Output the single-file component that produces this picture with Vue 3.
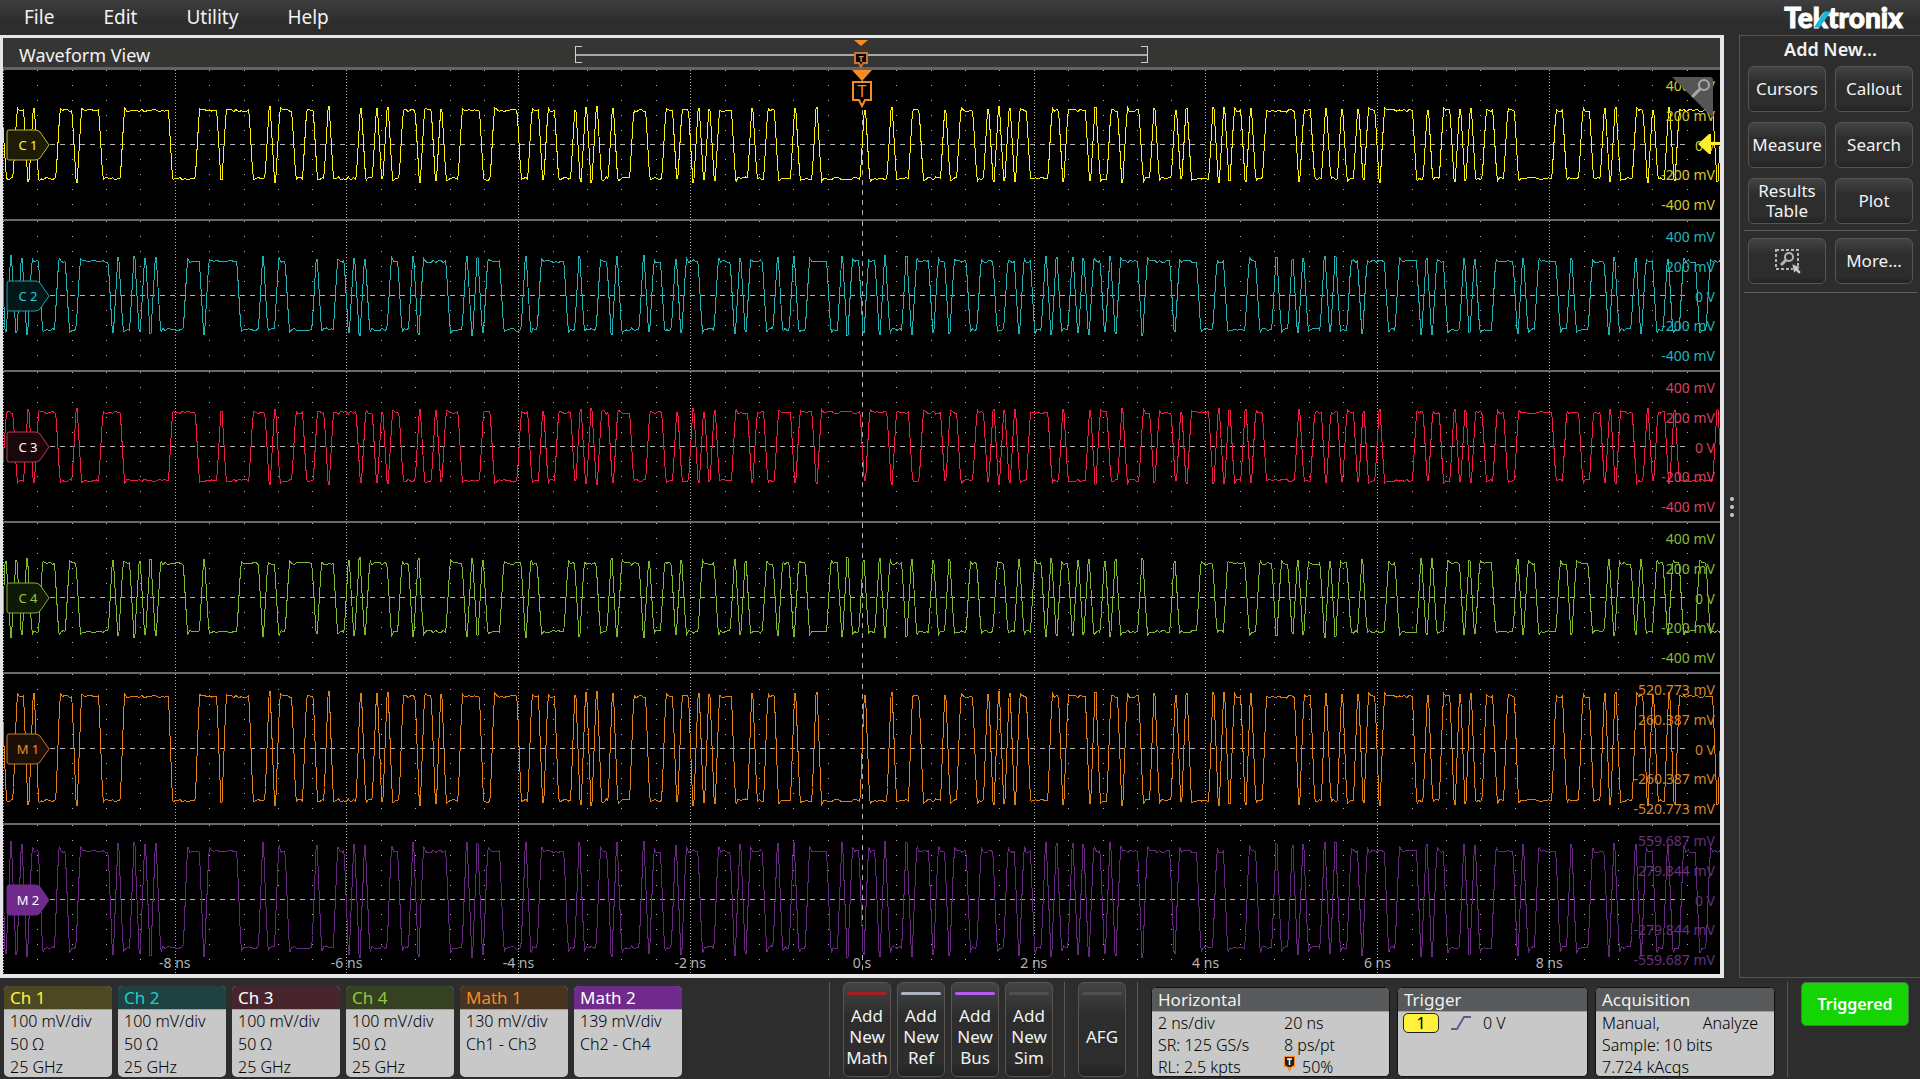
<template>
  <div class="scope">
    <header class="menubar">
      <nav class="menu">
        <button v-for="item in menu" :key="item" type="button">{{ item }}</button>
      </nav>
      <div class="logo">
        Tektronix
        <svg class="logo-slash" viewBox="0 0 18 18" aria-hidden="true">
          <path d="M0 18 11 1h7L6 18z" fill="#1fb6dc" />
        </svg>
      </div>
    </header>

    <main class="workspace">
      <section class="view">
        <div class="view-header">
          <h1>Waveform View</h1>
          <div class="overview">
            <svg class="overview-mark" viewBox="0 0 20 30" aria-hidden="true">
              <path d="M3 2h14l-7 6z" fill="#f68b1f" />
              <path d="M4 15h12v10h-4l-2 4-2-4H4z" fill="#000" stroke="#c8742a" stroke-width="2" />
              <text x="10" y="24" text-anchor="middle" font-size="9" font-weight="700" fill="#d98a45">T</text>
            </svg>
          </div>
        </div>

        <div class="plot">
          <div v-for="track in tracks" :key="track.id" class="track">
            <svg class="trace" :viewBox="`0 0 ${W} ${H}`" preserveAspectRatio="none">
              <path :d="dots" class="grid" />
              <path :d="majors" class="grid" stroke-dasharray="1 2" />
              <path :d="`M47 ${H / 2}H1682`" class="grid" stroke-dasharray="5 5" />
              <path :d="`M859.5 0V${H}`" class="grid" stroke-dasharray="5 5" />
              <path :d="track.path" class="wave" :stroke="track.wave" />
            </svg>
            <ul class="levels" :style="{ color: track.label }">
              <li v-for="level in track.levels" :key="level">{{ level }}</li>
            </ul>
            <div class="handle" :style="{ color: track.text }">
              <svg viewBox="0 0 44 32" aria-hidden="true">
                <path
                  d="M3 1h26q3 0 5 2l9 13-9 13q-2 2-5 2H3q-2 0-2-2V3q0-2 2-2z"
                  :fill="track.fill"
                  :stroke="track.edge"
                />
              </svg>
              <span>{{ track.id }}</span>
            </div>
          </div>

          <svg class="trigger-mark" viewBox="0 0 22 40" aria-hidden="true">
            <path d="M1 0h20L11 11z" fill="#f68b1f" />
            <path d="M2 12h18v18h-6l-3 6-3-6H2z" fill="#000" stroke="#f68b1f" stroke-width="2" />
            <text x="11" y="27" text-anchor="middle" font-size="16" fill="#f68b1f">T</text>
          </svg>
          <svg class="trigger-level" viewBox="0 0 22 20" aria-hidden="true">
            <path d="M0 10 11 0h2v8h9v3h-9v9h-2z" fill="#fff02e" />
          </svg>
          <svg class="zoom-corner" viewBox="0 0 42 42" aria-hidden="true">
            <path d="M0 0h38q3 0 3 3v38z" fill="#555" />
            <circle cx="32" cy="8" r="5" fill="none" stroke="#aaa" stroke-width="2" />
            <path d="m28 12-7 7" stroke="#aaa" stroke-width="3" stroke-linecap="round" />
          </svg>
          <span v-for="t in times" :key="t.label" class="time" :style="{ left: t.left }">{{ t.label }}</span>
        </div>
      </section>

      <div class="grip"><i></i><i></i><i></i></div>

      <aside class="side">
        <h2>Add New...</h2>
        <div class="side-grid">
          <button v-for="item in addNew" :key="item" type="button" class="btn">{{ item }}</button>
        </div>
        <div class="side-grid more">
          <button type="button" class="btn" aria-label="Draw a box">
            <svg width="28" height="26" viewBox="0 0 28 26" aria-hidden="true">
              <path d="M3 2h22v19H3z" fill="none" stroke="#b5b5b5" stroke-width="2" stroke-dasharray="3 2" />
              <circle cx="16" cy="9" r="4" fill="none" stroke="#b5b5b5" stroke-width="2" />
              <path d="m13 12-5 5" stroke="#b5b5b5" stroke-width="3" />
              <path d="m19 16 8 3-2 2 3 3-2 2-3-3-2 2z" fill="#c8c8c8" stroke="#2d2d2d" stroke-width="0.5" />
            </svg>
          </button>
          <button type="button" class="btn">More...</button>
        </div>
      </aside>
    </main>

    <footer class="settings">
      <div class="channels">
        <div v-for="ch in channels" :key="ch.name" class="card">
          <h3 :style="{ color: ch.color, background: ch.bg }">{{ ch.name }}</h3>
          <p v-for="line in ch.lines" :key="line">{{ line }}</p>
        </div>
      </div>

      <div class="adders">
        <button v-for="a in adders" :key="a.name" type="button" class="btn tall">
          <i :style="{ background: a.color }"></i>
          <span>Add<br />New<br />{{ a.name }}</span>
        </button>
      </div>
      <div class="adders">
        <button type="button" class="btn tall">
          <i></i>
          <span>AFG</span>
        </button>
      </div>

      <div class="systems">
        <div class="card dark horizontal">
          <h3>Horizontal</h3>
          <div class="pair"><p>2 ns/div</p><p>20 ns</p></div>
          <div class="pair"><p>SR: 125 GS/s</p><p>8 ps/pt</p></div>
          <div class="pair">
            <p>RL: 2.5 kpts</p>
            <p>
              <svg width="11" height="16" viewBox="0 0 11 16" aria-hidden="true">
                <path d="M0 0h11v11H8l-2.500 5L3 11H0z" fill="#f68b1f" />
                <path d="M1 1h9v8l-3 2H4L1 9z" fill="#222" />
                <path d="M3 3h5M5.500 3v6" stroke="#fff" stroke-width="1.500" />
              </svg>
              50%
            </p>
          </div>
        </div>
        <div class="card dark trigger">
          <h3>Trigger</h3>
          <div class="source">
            <span class="chip">1</span>
            <svg width="20" height="16" viewBox="0 0 20 16" aria-hidden="true">
              <path d="M0 14h6L13 2h7" fill="none" stroke="#5e5b8c" stroke-width="2" />
            </svg>
            <p>0 V</p>
          </div>
        </div>
        <div class="card dark acquisition">
          <h3>Acquisition</h3>
          <div class="spread"><p>Manual,</p><p>Analyze</p></div>
          <p>Sample: 10 bits</p>
          <p>7.724 kAcqs</p>
        </div>
      </div>

      <div class="status">
        <button type="button" class="triggered">Triggered</button>
      </div>
    </footer>
  </div>
</template>

<script setup>
const W = 1717;
const H = 149;
const DIV = 171.8;
const BIT = 5.362;

const menu = ['File', 'Edit', 'Utility', 'Help'];
const addNew = ['Cursors', 'Callout', 'Measure', 'Search', 'Results Table', 'Plot'];

// Lengths of the alternating runs, in bits. Both start low.
const dataA = (
  '2 2 1 1 4 3 1 4 4 9 5 4 1 5 3 1 1 3 2 2 2 1 5 1 2 1 1 1 2 3 1 2 1 1 3 4 ' +
  '2 5 2 2 1 2 3 1 1 1 1 1 2 1 3 3 3 2 1 2 1 1 1 1 1 3 3 1 2 2 3 1 3 1 8 1 4 1 3 2 4 1 2 ' +
  '3 2 1 1 1 1 1 1 2 4 2 1 4 1 1 2 2 1 3 2 1 3 1 1 1 4 1 1 1 1 2 1 1 2 6 1 2 2 1 2 1 2 1 1 2 1 6 2 1 ' +
  '2 2 1 1 1 1 2 2 2 2 7 2 3 2 2 1 1 1 3 2 1 1 2 1 1 7 1 2'
).split(' ').map(Number);
const dataB = (
  '1 1 1 1 1 2 3 2 2 6 1 1 2 1 1 1 1 1 5 3 1 6 4 1 2 2 5 1 3 2 1 1 1 1 4 2 2 1 1 5 3 1 1 1 ' +
  '1 3 4 1 2 5 2 1 3 2 1 1 4 1 1 2 2 1 1 3 3 3 1 1 1 3 2 1 2 1 2 4 2 1 1 2 1 2 1 1 3 1 1 3 1 2 1 ' +
  '3 2 3 2 2 1 2 2 1 1 1 2 1 1 1 1 2 1 1 1 4 1 5 1 4 3 2 4 2 3 1 2 1 1 1 3 1 1 1 2 2 1 4 2 4 1 1 1 ' +
  '2 3 1 1 1 3 4 1 1 2 4 2 1 3 3 1 1 3 1 1 2 2 1 2 3 2 7'
).split(' ').map(Number);

function buildWave(runs, start, amp, peak, invert) {
  let seed = 7;
  const noise = () => {
    seed = (seed * 16807) % 2147483647;
    return seed / 2147483647 - 0.5;
  };
  const flip = invert ? -1 : 1;
  const points = [`0 ${H / 2 - flip * amp * 0.5}`];
  let x = start;
  let level = -1;
  for (const run of runs) {
    const end = x + run * BIT;
    const add = (px, v) => points.push(`${px.toFixed(1)} ${(H / 2 - level * flip * v).toFixed(1)}`);
    add(x + 1.5, amp * 0.75);
    if (run === 1) {
      const top = peak - 1 + noise() * 4;
      add(x + BIT / 2 - 0.5, top);
      add(x + BIT / 2 + 0.5, top);
    } else {
      add(x + 2.6, (amp + peak) / 2 + noise() * 3);
      for (let px = x + 4.5; px < end - 3.5; px += 2.5) add(px, amp + noise() * 3);
      add(end - 2.4, amp + noise() * 2);
    }
    add(end - 1.5, amp * 0.75);
    x = end;
    level = -level;
  }
  return 'M' + points.join('L');
}

const volts = ['400 mV', '200 mV', '0 V', '-200 mV', '-400 mV'];
const tracks = [
  { id: 'C 1', wave: '#fff200', label: '#d3c92c', text: '#fff23c', edge: '#c2b92f', fill: '#1e1c06', levels: volts, path: buildWave(dataA, 1.3, 34, 37, false) },
  { id: 'C 2', wave: '#1fb0b4', label: '#1fb4b8', text: '#22cdd0', edge: '#1fa3a8', fill: '#041718', levels: volts, path: buildWave(dataB, 0, 34, 39, false) },
  { id: 'C 3', wave: '#ee1c44', label: '#d8405c', text: '#ffffff', edge: '#b83a50', fill: '#1a070b', levels: volts, path: buildWave(dataA, 1.3, 34, 37, true) },
  { id: 'C 4', wave: '#80b82c', label: '#85bb34', text: '#92c83e', edge: '#80b232', fill: '#101806', levels: volts, path: buildWave(dataB, 0, 34, 39, true) },
  { id: 'M 1', wave: '#e07f12', label: '#d5852c', text: '#ea8d2c', edge: '#c87a26', fill: '#1c1006', levels: ['520.773 mV', '260.387 mV', '0 V', '-260.387 mV', '-520.773 mV'], path: buildWave(dataA, 1.3, 52, 56, false) },
  { id: 'M 2', wave: '#66287c', label: '#68307f', text: '#ffffff', edge: '#6f2a8c', fill: '#6f2a8c', levels: ['559.687 mV', '279.844 mV', '0 V', '-279.844 mV', '-559.687 mV'], path: buildWave(dataB, 0, 48, 57, false) }
];

let majors = '';
for (let i = 0; i < 10; i++) {
  if (i !== 5) majors += `M${Math.floor(i * DIV + 0.3) + 0.5} 0V${H}`;
}

let dots = '';
for (let i = 0; i < 50; i++) {
  if (i % 5 === 0) continue;
  const x = Math.round((i * DIV) / 5);
  for (const y of [0, 15, 30, 45, 60, 89, 104, 119, 134]) dots += `M${x} ${y + 0.5}h1`;
}

const times = [-8, -6, -4, -2, 0, 2, 4, 6, 8].map((t, i) => ({
  label: t === 0 ? '0 s' : `${t} ns`,
  left: `${(((i + 1) * DIV) / W) * 100}%`
}));

const input = ['100 mV/div', '50 Ω', '25 GHz'];
const channels = [
  { name: 'Ch 1', color: '#fff23c', bg: '#4c4824', lines: input },
  { name: 'Ch 2', color: '#22cdd0', bg: '#1f4142', lines: input },
  { name: 'Ch 3', color: '#ffffff', bg: '#48252c', lines: input },
  { name: 'Ch 4', color: '#92c83e', bg: '#364023', lines: input },
  { name: 'Math 1', color: '#f08c28', bg: '#483220', lines: ['130 mV/div', 'Ch1 - Ch3'] },
  { name: 'Math 2', color: '#ffffff', bg: '#6f2a8c', lines: ['139 mV/div', 'Ch2 - Ch4'] }
];

const adders = [
  { name: 'Math', color: '#a32020' },
  { name: 'Ref', color: '#aeb4c4' },
  { name: 'Bus', color: '#b65cf0' },
  { name: 'Sim', color: '#505152' }
];
</script>

<style>
body {
  background: #2d2d2d;
}
</style>

<style scoped>
* {
  box-sizing: border-box;
  margin: 0;
  padding: 0;
}

.scope {
  display: flex;
  flex-direction: column;
  min-height: 100vh;
  color: #f2f2f2;
  font-family: "Noto Sans", "Open Sans", sans-serif;
  font-size: 17px;
  line-height: 22px;
}

button {
  font: inherit;
  color: inherit;
  border: none;
  background: none;
  cursor: pointer;
}

svg {
  display: block;
}

.menubar {
  display: flex;
  justify-content: space-between;
  align-items: center;
  height: 35px;
  padding: 0 17px 2px 24px;
  background: linear-gradient(#3e3e3e, #2d2d2d 60%);
}

.menu {
  display: flex;
  gap: 49px;
  font-size: 19px;
}

.logo {
  position: relative;
  color: #fff;
  font-family: Lato, "Open Sans", sans-serif;
  font-size: 28px;
  font-weight: 900;
  line-height: 28px;
  -webkit-text-stroke: 1px #fff;
}

.logo-slash {
  position: absolute;
  left: 30px;
  top: 7px;
  width: 17px;
  height: 18px;
}

.workspace {
  flex: 1;
  display: flex;
}

.view {
  flex: 1;
  display: flex;
  flex-direction: column;
  border: 3px solid #e6e6e8;
  border-right-width: 4px;
  border-bottom-width: 4px;
}

.view-header {
  display: grid;
  grid-template-columns: 1fr 1fr 1fr;
  align-items: center;
  height: 32px;
  padding-top: 4px;
  background: #353533;
  border-bottom: 3px solid #636466;
}

h1 {
  padding-left: 16px;
  font-size: 18px;
  font-weight: 400;
}

.overview {
  position: relative;
  height: 17px;
  border: 1px solid #d0d0d0;
  border-width: 0 1px;
  background:
    linear-gradient(#d0d0d0, #d0d0d0) 0 0 / 6px 1px no-repeat,
    linear-gradient(#d0d0d0, #d0d0d0) 0 100% / 6px 1px no-repeat,
    linear-gradient(#d0d0d0, #d0d0d0) 100% 0 / 6px 1px no-repeat,
    linear-gradient(#d0d0d0, #d0d0d0) 100% 100% / 6px 1px no-repeat,
    linear-gradient(#a8a8a8, #a8a8a8) 0 50% / 100% 2px no-repeat;
}

.overview-mark {
  position: absolute;
  left: calc(50% - 10px);
  top: -8px;
  width: 20px;
  height: 30px;
}

.plot {
  position: relative;
  flex: 1;
  display: flex;
  flex-direction: column;
  background: #000;
}

.track {
  position: relative;
  flex: 1;
  min-height: 110px;
  border-bottom: 2px solid #6a6a6a;
}

.track:nth-child(6) {
  border-bottom: none;
}

.trace {
  position: absolute;
  width: 100%;
  height: 100%;
  shape-rendering: crispEdges;
}

.grid,
.wave {
  fill: none;
  stroke-width: 1;
  vector-effect: non-scaling-stroke;
}

.grid {
  stroke: #b4b4b4;
}

.levels {
  position: absolute;
  inset: 0 5px 0 auto;
  display: flex;
  flex-direction: column;
  justify-content: space-between;
  padding: 8px 0 6px;
  list-style: none;
  text-align: right;
  font-size: 14px;
  line-height: 16px;
}

.handle {
  position: absolute;
  left: 3px;
  top: calc(50% - 16px);
  width: 44px;
  height: 32px;
  font-size: 13px;
  line-height: 32px;
}

.handle span {
  position: absolute;
  inset: 0 10px 0 0;
  padding-left: 10px;
  text-align: center;
}

.handle svg {
  position: absolute;
  width: 44px;
  height: 32px;
}

.trigger-mark {
  position: absolute;
  left: calc(50% - 11px);
  top: 0;
  width: 22px;
  height: 40px;
}

.trigger-level {
  position: absolute;
  right: 0;
  top: 64px;
  width: 22px;
  height: 20px;
}

.zoom-corner {
  position: absolute;
  right: 6px;
  top: 7px;
  width: 42px;
  height: 42px;
}

.time {
  position: absolute;
  bottom: 2px;
  transform: translateX(-50%);
  color: #b4b4b4;
  font-size: 14px;
  line-height: 18px;
}

.grip {
  display: flex;
  flex-direction: column;
  justify-content: center;
  align-items: center;
  gap: 4px;
  width: 15px;
}

.grip i {
  width: 4px;
  height: 4px;
  border-radius: 50%;
  background: #c8c8c8;
}

.side {
  width: 181px;
  padding: 2px 3px 0 4px;
  border: 1px solid #555;
  border-right: none;
}

h2 {
  font-size: 18px;
  font-weight: 600;
  text-align: center;
}

.side-grid {
  display: grid;
  grid-template-columns: 78px 78px;
  grid-auto-rows: 46px;
  gap: 10px 9px;
  padding: 6px 4px;
  border-bottom: 1px solid #615b57;
}

.side-grid.more {
  padding: 7px 4px 8px;
}

.btn {
  display: flex;
  align-items: center;
  justify-content: center;
  border: 1px solid #5a534f;
  border-radius: 6px;
  background: linear-gradient(#424445, #2d2d2d 35%, #2d2d2d 85%, #222);
  line-height: 20px;
}

.settings {
  display: flex;
  align-items: flex-start;
  padding: 4px 11px 2px 4px;
}

.channels {
  display: flex;
  gap: 6px;
  margin-top: 4px;
  margin-right: auto;
}

.card {
  width: 108px;
  height: 91px;
  overflow: hidden;
  border-radius: 5px;
  background: #c8c8c8;
  color: #000;
}

.card h3 {
  height: 24px;
  padding-left: 6px;
  border-bottom: 1px solid #a0a0a0;
  font-size: 17px;
  font-weight: 400;
  line-height: 24px;
}

.card p {
  padding-left: 6px;
  font-size: 16px;
  font-weight: 300;
  line-height: 23px;
}

.adders {
  display: flex;
  gap: 6px;
  padding: 0 11px 0 13px;
  border-left: 1px solid #605850;
}

.tall {
  position: relative;
  width: 48px;
  height: 95px;
  padding-top: 14px;
  line-height: 21px;
}

.tall i {
  position: absolute;
  top: 9px;
  left: 3px;
  right: 3px;
  height: 3px;
  border-radius: 2px;
  background: #505152;
}

.systems {
  display: flex;
  gap: 7px;
  padding: 5px 12px 0 13px;
  border-left: 1px solid #605850;
}

.dark {
  height: 90px;
  border: 1px solid #111;
}

.dark h3 {
  color: #f0f0f0;
  background: #58595b;
}

.dark p {
  line-height: 22px;
}

.horizontal {
  width: 239px;
}

.trigger {
  width: 191px;
}

.acquisition {
  width: 180px;
}

.pair {
  display: grid;
  grid-template-columns: 126px 1fr;
}

.pair p {
  display: flex;
  gap: 7px;
}

.spread {
  display: flex;
  justify-content: space-between;
  padding-right: 16px;
}

.source {
  display: flex;
  align-items: center;
  gap: 12px;
  padding-left: 5px;
}

.source p {
  padding-left: 0;
}

.chip {
  width: 36px;
  height: 20px;
  border: 1px solid #222;
  border-radius: 5px;
  background: #fff23c;
  text-align: center;
  font-size: 16px;
  line-height: 18px;
}

.status {
  align-self: stretch;
  padding-left: 13px;
  border-left: 1px solid #605850;
}

.triggered {
  width: 108px;
  height: 44px;
  border: 1px solid #3f7a3f;
  border-radius: 5px;
  background: #14d404;
  color: #fff;
  font-size: 16px;
  font-weight: 600;
}
</style>
